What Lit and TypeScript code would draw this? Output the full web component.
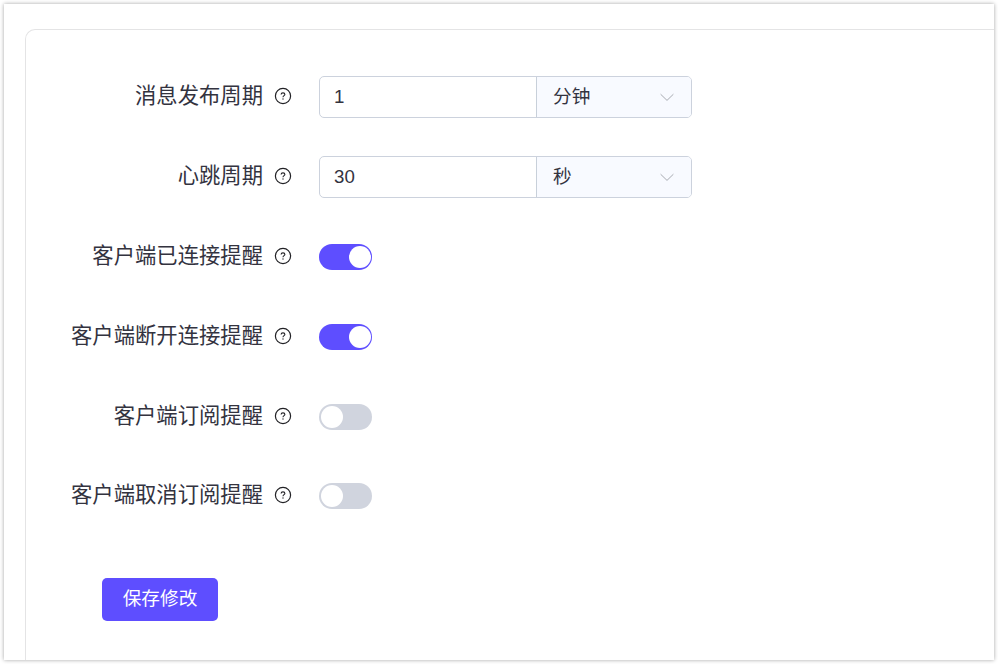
import { LitElement, html, css, svg, nothing } from "lit";
import { customElement, property, state } from "lit/decorators.js";
import { classMap } from "lit/directives/class-map.js";

interface PeriodRow { kind: "period"; label: string; value: string; unit: string; }
interface SwitchRow { kind: "switch"; label: string; on: boolean; }
type Row = PeriodRow | SwitchRow;

@customElement("help-icon")
class HelpIcon extends LitElement {
  static styles = css`
    :host { display: block; width: 18px; height: 18px; }
    svg { display: block; }
  `;
  render() {
    return html`<svg width="18" height="18" viewBox="0 0 18 18" fill="none" stroke="#222226">
      ${svg`<circle cx="9" cy="9" r="7.6" stroke-width="1.2"/>
      <path d="M7.1 7.6C7.1 6.5 7.9 5.9 9 5.9S10.9 6.5 10.9 7.4C10.9 8.6 9 8.7 9 10.2" stroke-width="1.1"/>
      <circle cx="9" cy="12" r="0.7" fill="#222226" stroke="none"/>`}
    </svg>`;
  }
}

@customElement("toggle-switch")
class ToggleSwitch extends LitElement {
  @property({ type: Boolean }) on = false;
  static styles = css`
    :host { display: block; }
    .track {
      box-sizing: border-box; display: flex; align-items: center;
      width: 53px; height: 26px; padding: 0 1.5px; border-radius: 13px;
      background: #d0d4de; cursor: pointer;
    }
    .on { background: #5e4eff; justify-content: flex-end; }
    .knob { width: 22px; height: 22px; border-radius: 50%; background: #fff; }
  `;
  render() {
    return html`<div class=${classMap({ track: true, on: this.on })}
      role="switch" aria-checked=${String(this.on)} @click=${() => { this.on = !this.on; }}>
      <div class="knob"></div>
    </div>`;
  }
}

@customElement("period-input")
class PeriodInput extends LitElement {
  @property() value = "";
  @property() unit = "";
  static styles = css`
    :host { display: block; }
    .group {
      box-sizing: border-box; display: flex; width: 373px; height: 42px;
      border: 1px solid #ccd2dd; border-radius: 5px; overflow: hidden;
      font-size: 18.67px; line-height: 39px; color: #33333f; background: #fff;
    }
    .value { box-sizing: border-box; width: 216px; padding-left: 14px; }
    .unit {
      flex: 1; display: flex; justify-content: space-between; align-items: center;
      padding: 0 16px; border-left: 1px solid #c8d0da; background: #f8faff;
    }
    .unit span { padding-bottom: 2px; }
  `;
  render() {
    return html`<div class="group">
      <div class="value">${this.value}</div>
      <div class="unit"><span>${this.unit}</span>
        <svg width="16" height="16" viewBox="0 0 16 16" fill="none" stroke="#a8abb2" stroke-width="1">
          <path d="M1.6 5.2L8 11.4L14.4 5.2"/>
        </svg>
      </div>
    </div>`;
  }
}

@customElement("app-root")
class AppRoot extends LitElement {
  @state() rows: Row[] = [
    { kind: "period", label: "消息发布周期", value: "1", unit: "分钟" },
    { kind: "period", label: "心跳周期", value: "30", unit: "秒" },
    { kind: "switch", label: "客户端已连接提醒", on: true },
    { kind: "switch", label: "客户端断开连接提醒", on: true },
    { kind: "switch", label: "客户端订阅提醒", on: false },
    { kind: "switch", label: "客户端取消订阅提醒", on: false },
  ];

  static styles = css`
    :host {
      display: block; box-sizing: border-box; height: 664px; padding: 4px; overflow: hidden;
      background: #fff; color: #33333f;
      font-family: "Liberation Sans", "Noto Sans CJK SC", sans-serif;
    }
    .frame {
      box-sizing: border-box; width: 990px; height: 656px; padding: 25px 0 0 21px;
      background: #fff; box-shadow: 0 0 4px rgba(0, 0, 0, 0.36); overflow: hidden;
    }
    .card {
      box-sizing: border-box; height: 631px; padding: 46px 0 0 20px;
      border: 1px solid #e4e4e5; border-right: 0; border-bottom: 0;
      border-top-left-radius: 10px;
    }
    .row { display: flex; align-items: center; height: 42px; margin-bottom: 38px; }
    .row:nth-child(5) { margin-bottom: 37.4px; }
    .row:last-child .label { padding-bottom: 3px; }
    .label {
      display: flex; justify-content: flex-end; align-items: center; gap: 11px;
      width: 246px; margin-right: 27px; padding-bottom: 2px;
      font-size: 21.33px; line-height: 30px; white-space: nowrap;
    }
    .save {
      display: block; width: 116px; height: 43px; margin: 60.6px 0 0 56px; padding: 0 0 1px;
      border: 0; border-radius: 5px; background: #5e4eff; color: #fff;
      font-family: inherit; font-size: 18.67px; line-height: 42px; cursor: pointer;
    }
  `;

  render() {
    return html`<main class="frame"><section class="card">
      <div class="rows">${this.rows.map((r) => html`<div class="row">
        <div class="label"><span>${r.label}</span><help-icon></help-icon></div>
        ${r.kind === "period"
          ? html`<period-input .value=${r.value} .unit=${r.unit}></period-input>`
          : r.kind === "switch"
            ? html`<toggle-switch .on=${r.on}></toggle-switch>`
            : nothing}
      </div>`)}</div>
      <button class="save">保存修改</button>
    </section></main>`;
  }
}
